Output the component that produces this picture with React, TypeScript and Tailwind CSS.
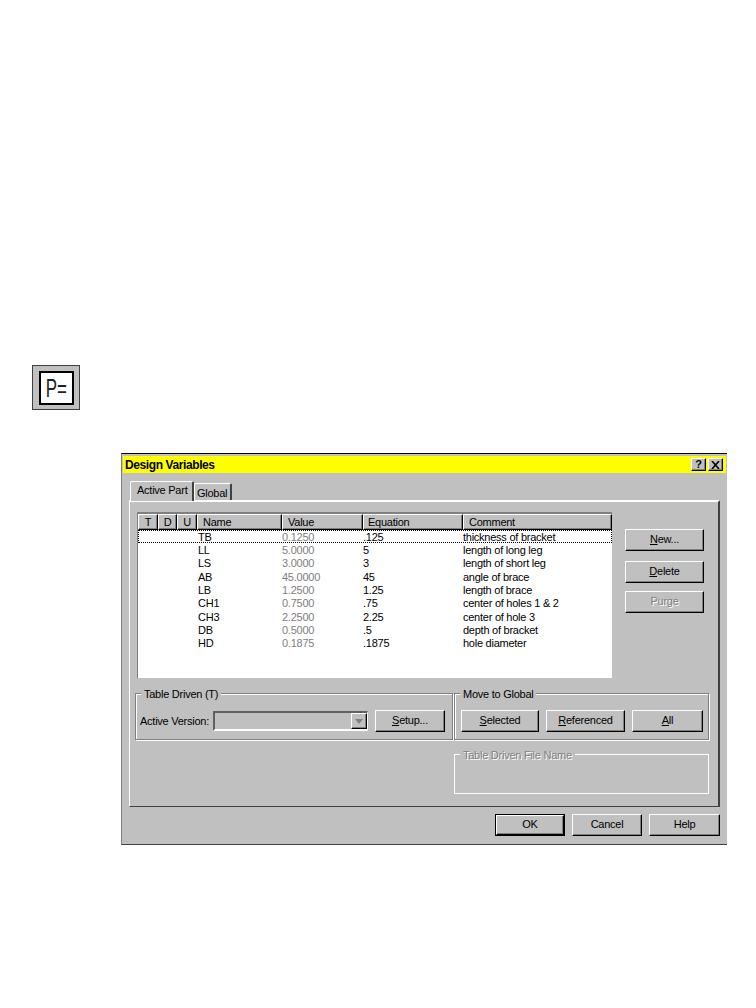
const rows = [
  ["TB", "0.1250", ".125", "thickness of bracket"],
  ["LL", "5.0000", "5", "length of long leg"],
  ["LS", "3.0000", "3", "length of short leg"],
  ["AB", "45.0000", "45", "angle of brace"],
  ["LB", "1.2500", "1.25", "length of brace"],
  ["CH1", "0.7500", ".75", "center of holes 1 & 2"],
  ["CH3", "2.2500", "2.25", "center of hole 3"],
  ["DB", "0.5000", ".5", "depth of bracket"],
  ["HD", "0.1875", ".1875", "hole diameter"],
];

const bevel =
  "border-t border-l border-t-white border-l-white border-r border-b border-r-black border-b-black shadow-[inset_-1px_-1px_0_#808080]";

function Btn({ w, h = "h-[22px]", u, rest, disabled, isDefault }: { w: string; h?: string; u?: string; rest: string; disabled?: boolean; isDefault?: boolean }) {
  return (
    <div className={`${w} ${h} shrink-0 ${isDefault ? "border border-black" : ""}`}>
      <div className={`h-full w-full flex items-center justify-center pb-[1px] ${bevel}`}>
        {disabled ? (
          <span className="text-[#808080] [text-shadow:1px_1px_0_#fff]">{rest}</span>
        ) : (
          <span>
            {u && <span className="underline">{u}</span>}
            {rest}
          </span>
        )}
      </div>
    </div>
  );
}

function HeadCell({ w, label, pad = "pl-[5px]" }: { w: string; label: string; pad?: string }) {
  return (
    <div className={`${w} h-full flex items-center ${pad} ${bevel} shrink-0`}>
      {label}
    </div>
  );
}

function Group({ label, w, h, disabled, children }: { label: string; w: string; h: string; disabled?: boolean; children?: React.ReactNode }) {
  return (
    <div className={`relative ${w} ${h} border ${disabled ? "border-white" : "border-[#808080] shadow-[inset_1px_1px_0_#fff,1px_1px_0_#fff]"}`}>
      <span className={`absolute left-[5px] -top-[7px] h-[14px] leading-[14px] px-[3px] bg-[#c0c0c0] ${disabled ? "text-[#808080] [text-shadow:1px_1px_0_#fff]" : ""}`}>
        {label}
      </span>
      {children}
    </div>
  );
}

export default function App() {
  return (
    <div className="w-[756px] h-[1008px] bg-white overflow-hidden text-[11px] leading-none tracking-[-0.25px] text-black [font-family:'Liberation_Sans',Arial,sans-serif]">
      {/* Tool icon */}
      <div className="mt-[365px] ml-[32px] w-[48px] h-[45px] bg-[#c0c0c0] border border-[#404040] flex items-center justify-center">
        <div className="w-[35px] h-[34px] bg-white border-2 border-black flex items-center justify-center overflow-hidden pt-[1px]">
          <span className="text-[26px] leading-none scale-x-[0.65] whitespace-nowrap tracking-[0px] text-[#202020]">P=</span>
        </div>
      </div>

      {/* Dialog */}
      <div className="mt-[43px] ml-[121px] w-[606px] h-[392px] bg-[#c0c0c0] border-t border-t-black border-b border-b-[#404040] border-l border-l-[#808080]">
        <div className="mx-[1px] mt-[2px] h-[17px] bg-[#ffff00] flex items-center pl-[2px] pr-[3px]">
          <span className="font-bold text-[12px] tracking-[-0.4px]">Design Variables</span>
          <div className="ml-auto flex gap-[2px]">
            <div className={`w-[15px] h-[13px] flex items-center justify-center font-bold text-[11px] bg-[#c0c0c0] ${bevel}`}>?</div>
            <div className={`w-[15px] h-[13px] flex items-center justify-center bg-[#c0c0c0] ${bevel}`}>
              <svg width="9" height="8" viewBox="0 0 9 8">
                <path d="M1 0 L8 8 M8 0 L1 8" stroke="#000" strokeWidth="1.6" />
              </svg>
            </div>
          </div>
        </div>

        {/* Tabs */}
        <div className="mt-[8px] ml-[8px] h-[19px] flex items-end">
          <div className="relative z-10 w-[64px] h-[20px] -mb-[1px] pl-[6px] pt-[3px] bg-[#c0c0c0] border-t border-l border-white border-r-2 border-r-[#404040] rounded-t-[2px]">
            Active Part
          </div>
          <div className="w-[38px] h-[17px] pl-[2px] pt-[4px] bg-[#c0c0c0] border-t border-l border-white border-r-2 border-r-[#404040] rounded-t-[2px]">
            Global
          </div>
        </div>

        {/* Panel */}
        <div className="ml-[7px] w-[591px] h-[307px] border-t-2 border-t-white border-l border-l-white border-r-2 border-r-[#404040] border-b border-b-[#404040] pt-[10px] pl-[5px]">
          <div className="flex">
            <div className="ml-[2px] w-[475px] h-[166px] bg-white border-t-2 border-l border-[#808080]">
              <div className="h-[16px] flex bg-[#c0c0c0]">
                <HeadCell w="w-[20px]" label="T" pad="justify-center" />
                <HeadCell w="w-[19px]" label="D" pad="justify-center" />
                <HeadCell w="w-[20px]" label="U" pad="justify-center" />
                <HeadCell w="w-[85px]" label="Name" />
                <HeadCell w="w-[81px]" label="Value" />
                <HeadCell w="w-[100px]" label="Equation" pad="pl-[4px]" />
                <HeadCell w="w-[149px]" label="Comment" />
              </div>
              {rows.map((r, i) => (
                <div key={r[0]} className={`flex h-[13.33px] items-center pt-[1px] ${i === 0 ? "outline outline-1 -outline-offset-1 outline-dotted outline-black" : ""}`}>
                  <div className="w-[60px]" />
                  <div className="w-[84px]">{r[0]}</div>
                  <div className="w-[81px] text-[#808080]">{r[1]}</div>
                  <div className="w-[100px]">{r[2]}</div>
                  <div>{r[3]}</div>
                </div>
              ))}
            </div>
            <div className="ml-[13px] mt-[17px] flex flex-col">
              <Btn w="w-[79px]" u="N" rest="ew..." />
              <div className="h-[10px]" />
              <Btn w="w-[79px]" u="D" rest="elete" />
              <div className="h-[8px]" />
              <Btn w="w-[79px]" rest="Purge" disabled />
            </div>
          </div>

          <div className="mt-[15px] flex gap-[1px]">
            <Group label="Table Driven (T)" w="w-[318px]" h="h-[47px]">
              <div className="h-full flex items-center pl-[4px] pt-[9px]">
                <span className="w-[73px]">Active Version:</span>
                <div className="w-[155px] h-[20px] bg-[#c0c0c0] border-t-2 border-l-2 border-t-[#606060] border-l-[#606060] border-b-2 border-r border-b-white border-r-white flex justify-end">
                  <div className={`w-[16px] h-full flex items-center justify-center ${bevel}`}>
                    <div className="w-0 h-0 border-l-[4px] border-r-[4px] border-t-[5px] border-l-transparent border-r-transparent border-t-[#808080]" />
                  </div>
                </div>
                <div className="w-[7px]" />
                <Btn w="w-[70px]" u="S" rest="etup..." />
              </div>
            </Group>
            <Group label="Move to Global" w="w-[255px]" h="h-[47px]">
              <div className="h-full flex items-center pl-[6px] pt-[9px] gap-[7px]">
                <Btn w="w-[78px]" u="S" rest="elected" />
                <Btn w="w-[79px]" u="R" rest="eferenced" />
                <Btn w="w-[71px]" u="A" rest="ll" />
              </div>
            </Group>
          </div>

          <div className="mt-[14px] ml-[319px]">
            <Group label="Table Driven File Name" w="w-[255px]" h="h-[40px]" disabled />
          </div>
        </div>

        {/* Bottom buttons */}
        <div className="mt-[7px] mr-[7px] flex justify-end gap-[7px]">
          <Btn w="w-[70px]" rest="OK" isDefault />
          <Btn w="w-[70px]" rest="Cancel" />
          <Btn w="w-[71px]" rest="Help" />
        </div>
      </div>
    </div>
  );
}
